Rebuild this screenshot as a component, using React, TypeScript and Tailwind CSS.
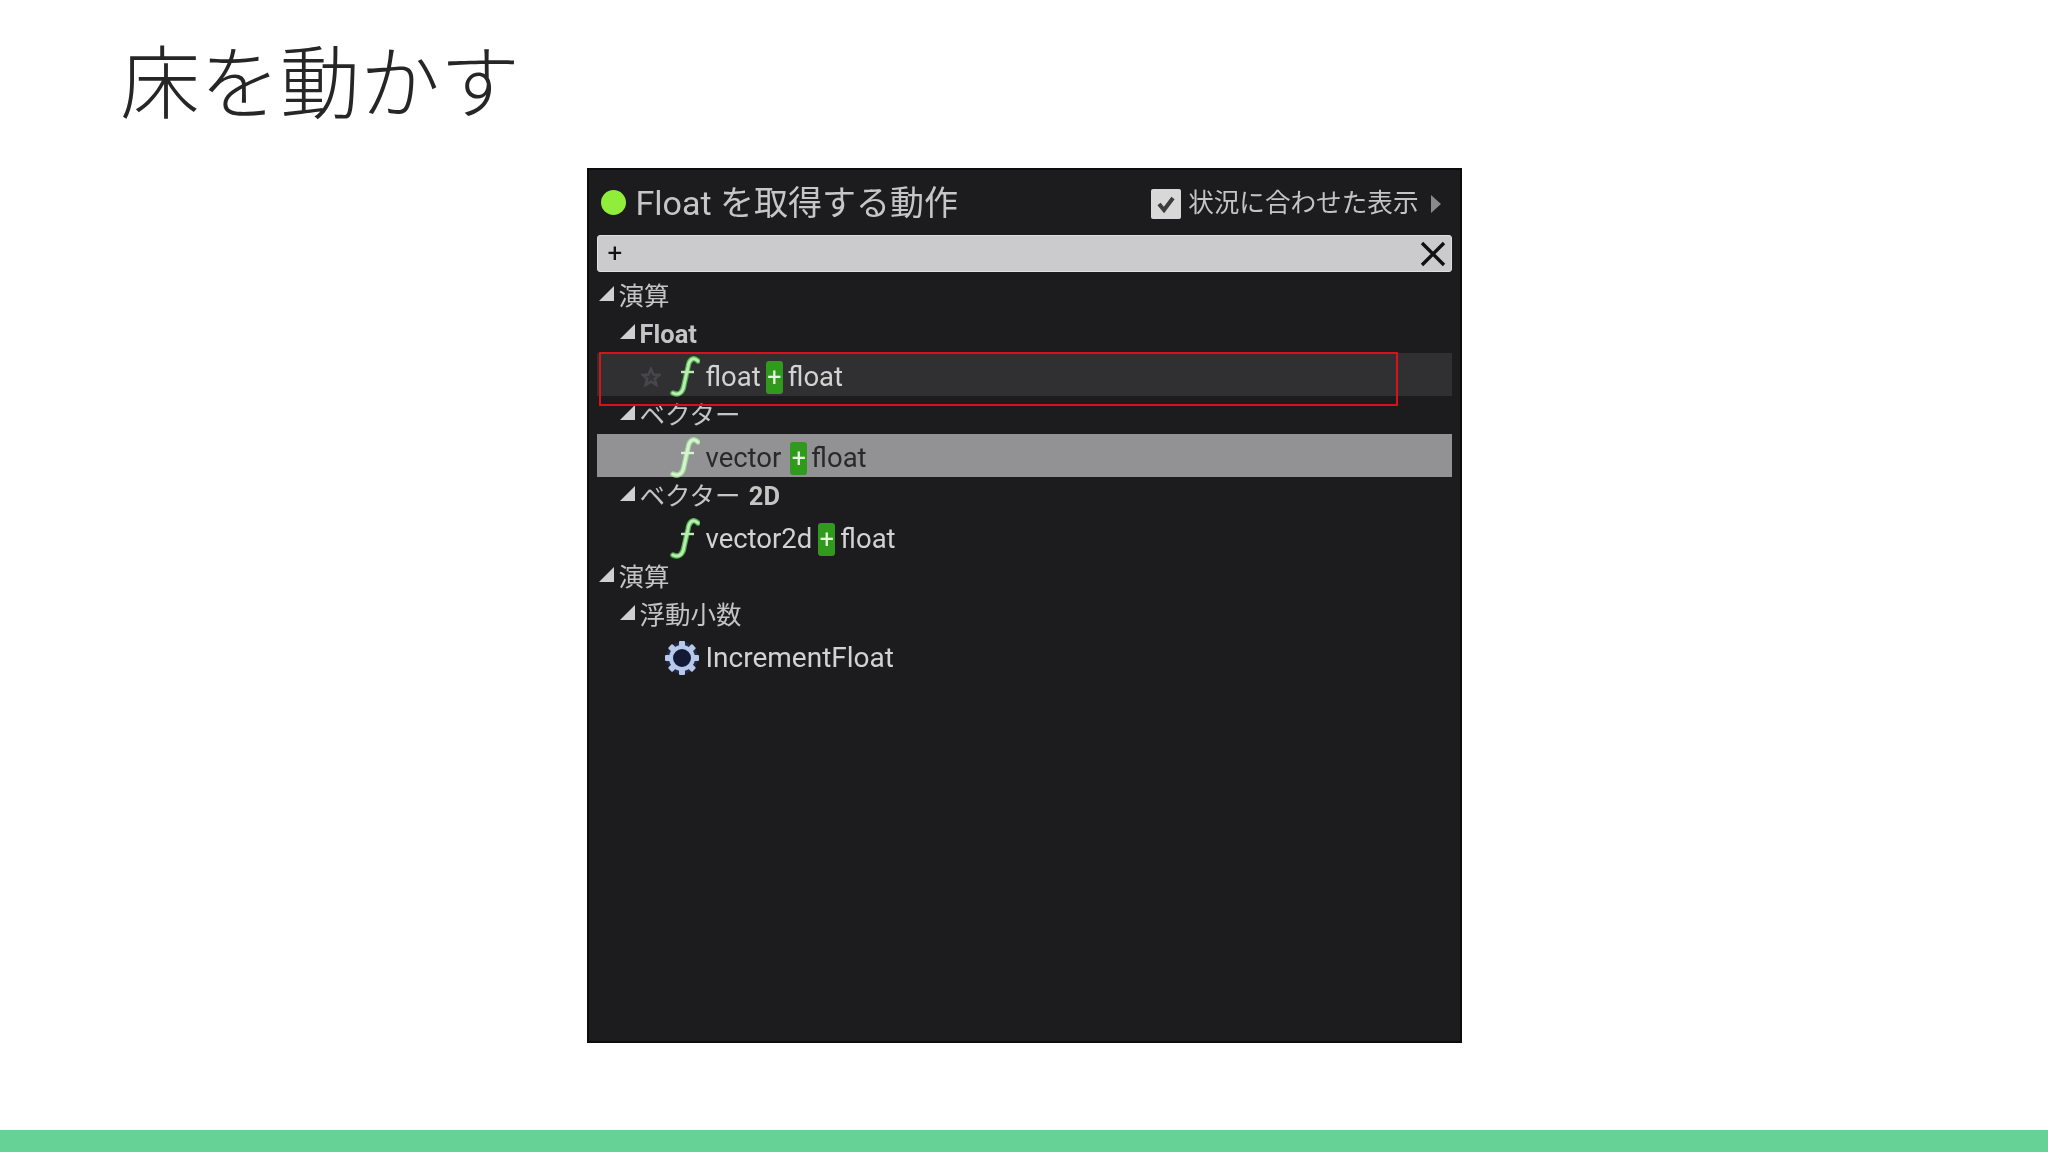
import React from "react";

const ui = "font-['Roboto','Noto_Sans_CJK_JP',sans-serif]";

function Tri() {
  return (
    <svg width="15" height="15" viewBox="0 0 15 15" className="shrink-0 -translate-y-[3px]">
      <polygon points="15,0 15,15 0,15" fill="#d0d0d0" />
    </svg>
  );
}

function FIcon({ color = "#b9ecb0", edge = "#4fae4c" }: { color?: string; edge?: string }) {
  const d = "M28 5 C23 0 19 4 18 11 L14 29 C13 36 9 40 3 37";
  return (
    <svg width="30" height="42" viewBox="0 0 30 42" className="shrink-0">
      <path d={d} fill="none" stroke={edge} strokeWidth="5.4" strokeLinecap="round" />
      <path d={d} fill="none" stroke={color} strokeWidth="3" strokeLinecap="round" />
      <path d="M11 16 L24 16" stroke={color} strokeWidth="2.4" />
    </svg>
  );
}

function Gear() {
  const teeth = [0, 45, 90, 135, 180, 225, 270, 315];
  return (
    <svg width="36" height="38" viewBox="0 0 36 36" className="shrink-0">
      <circle cx="18" cy="18" r="16" fill="#26356a" opacity="0.55" />
      {teeth.map((a) => (
        <rect key={a} x="15" y="1" width="6" height="8" rx="1" fill="#b7c9ea" transform={`rotate(${a} 18 18)`} />
      ))}
      <circle cx="18" cy="18" r="11" fill="#121a36" stroke="#b7c9ea" strokeWidth="4" />
    </svg>
  );
}

function Plus({ gap }: { gap: string }) {
  return (
    <span className={`flex h-[33px] w-[17px] shrink-0 items-center justify-center rounded-[3px] bg-[#2f9a1c] text-[25px] leading-none text-[#e4f5dc] ${gap}`}>
      +
    </span>
  );
}

function Group({ indent, children }: { indent: string; children: React.ReactNode }) {
  return (
    <div className={`flex h-[38px] items-center gap-[5px] pt-[1px] text-[25.5px] leading-none text-[#c4c4c4] ${indent}`}>
      <Tri />
      <span>{children}</span>
    </div>
  );
}

function FnRow({
  left,
  gap,
  bg = "",
  text = "text-[#d2d2d2]",
  star = false,
  light = false,
}: {
  left: string;
  gap: string;
  bg?: string;
  text?: string;
  star?: boolean;
  light?: boolean;
}) {
  return (
    <div className={`flex h-[43px] items-center pl-[43px] pt-[5px] text-[27.5px] leading-none ${bg} ${text}`}>
      <span className="flex w-[30px] -translate-x-[4px] justify-center">
        {star && (
          <svg width="20" height="20" viewBox="0 0 24 24">
            <polygon points="12,2 15,9 22,9.5 16.5,14 18.5,21.5 12,17.5 5.5,21.5 7.5,14 2,9.5 9,9" fill="#343437" stroke="#47474b" strokeWidth="3" />
          </svg>
        )}
      </span>
      <FIcon color={light ? "#d6f5cf" : "#b9ecb0"} edge={light ? "#9fd69a" : "#4fae4c"} />
      <span className="ml-[6px]">{left}</span>
      <Plus gap={gap} />
      <span>float</span>
    </div>
  );
}

export default function App() {
  return (
    <div className="flex h-[1152px] w-[2048px] flex-col bg-white">
      <h1 className="flex h-[168px] items-start pl-[120px] pt-[31px] font-['Noto_Sans_CJK_JP',sans-serif] text-[80px] font-light leading-[92px] text-[#262626]">
        床を動かす
      </h1>

      <div className="flex flex-1 justify-center">
        <div className={`relative h-[875px] w-[875px] border-2 border-[#0c0c0c] bg-[#1c1b1e] ${ui}`}>
          <div className="px-[8px] blur-[0.5px]">
            <div className="flex h-[65px] items-center pl-[4px] pr-[10px]">
              <span className="h-[25px] w-[25px] shrink-0 rounded-full bg-[#90ee3a]" />
              <span className="ml-[10px] text-[34px] leading-none text-[#c6c6c6]">Float を取得する動作</span>
              <span className="ml-auto mt-[2px] flex h-[30px] w-[30px] items-center justify-center rounded-[2px] bg-[#d8d8d8]">
                <svg width="22" height="22" viewBox="0 0 22 22">
                  <path d="M4 11 L9 17 L18 5" fill="none" stroke="#3c3c3c" strokeWidth="4" />
                </svg>
              </span>
              <span className="ml-[7px] mt-[3px] text-[25.6px] leading-none text-[#c4c4c4]">状況に合わせた表示</span>
              <svg width="12" height="20" viewBox="0 0 12 20" className="ml-[11px] mt-[2px]">
                <polygon points="1,1 11,10 1,19" fill="#8a8a8a" />
              </svg>
            </div>

            <div className="flex h-[37px] items-center justify-between rounded-[3px] border border-[#e0dfe2] bg-[#cbcacc] pl-[10px] pr-[4px] text-[#111]">
              <span className="-translate-y-[1px] text-[26px] leading-none">+</span>
              <svg width="28" height="28" viewBox="0 0 28 28">
                <path d="M3 3 L25 25 M25 3 L3 25" stroke="#111" strokeWidth="3.4" />
              </svg>
            </div>

            <div className="mt-[5px]">
              <Group indent="pl-[2px]">演算</Group>
              <Group indent="pl-[23px]"><b className="font-bold">Float</b></Group>
              <FnRow left="float" gap="mx-[5px]" bg="bg-[#303032]" star />
              <Group indent="pl-[23px]">ベクター</Group>
              <FnRow left="vector" gap="ml-[9px] mr-[4px]" bg="bg-[#929294]" text="text-[#29292b]" light />
              <Group indent="pl-[23px]">
                ベクター <b className="ml-[2px] font-bold">2D</b>
              </Group>
              <FnRow left="vector2d" gap="ml-[6px] mr-[5px]" />
              <Group indent="pl-[2px]">演算</Group>
              <Group indent="pl-[23px]">浮動小数</Group>
              <div className="flex h-[43px] items-center pl-[67px] pt-[5px] text-[28px] leading-none text-[#d2d2d2]">
                <Gear />
                <span className="ml-[6px]">IncrementFloat</span>
              </div>
            </div>
          </div>

          <div className="absolute left-[10px] top-[182px] h-[54px] w-[799px] border-2 border-[#d8121c]" />
        </div>
      </div>

      <div className="h-[22px] bg-[#66d296]" />
    </div>
  );
}
